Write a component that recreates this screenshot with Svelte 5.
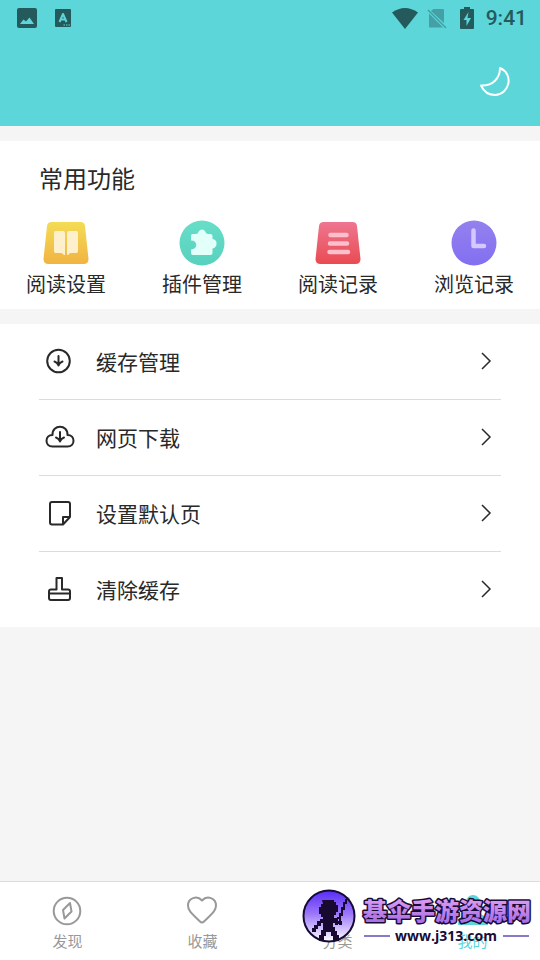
<script>
  const features = [
    { id: 'read', label: '阅读设置' },
    { id: 'plugin', label: '插件管理' },
    { id: 'log', label: '阅读记录' },
    { id: 'history', label: '浏览记录' }
  ];
  const rows = [
    { id: 'cache', label: '缓存管理' },
    { id: 'web', label: '网页下载' },
    { id: 'page', label: '设置默认页' },
    { id: 'clear', label: '清除缓存' }
  ];
  const tabs = [
    { id: 'discover', label: '发现' },
    { id: 'favorite', label: '收藏' },
    { id: 'category', label: '分类' },
    { id: 'mine', label: '我的' }
  ];
</script>

<div class="screen">
  <header>
    <div class="status">
      <div class="group left">
        <svg width="20" height="20" viewBox="0 0 20 20" aria-hidden="true">
          <rect width="20" height="20" rx="2" fill="#255a5d" />
          <path d="M3 16l3.500-4.500 2.500 2L12.500 9.500l4.500 6.500z" fill="#5cd6d9" />
        </svg>
        <svg width="16" height="18" viewBox="0 0 16 18" aria-hidden="true">
          <rect width="16" height="18" rx="1" fill="#255a5d" />
          <path d="M4.500 13L8 5l3.500 8M5.800 10.500h4.400" fill="none" stroke="#5cd6d9" stroke-width="2" stroke-linejoin="round" />
          <path d="M8.500 16h1.500m1 0h1.500m1 0h1.500" stroke="#5cd6d9" stroke-width="1.200" />
        </svg>
      </div>
      <div class="group right">
        <svg width="26" height="21" viewBox="0 0 26 21" aria-hidden="true">
          <path d="M0 4.500Q13-4.500 26 4.500L13 21z" fill="#255a5d" />
        </svg>
        <svg class="sim" width="20" height="21" viewBox="0 0 20 21" aria-hidden="true">
          <path d="M5 2L7 1h9q1 0 1 1v13L4 3zM2 5.500l14 14H3q-1 0-1-1z" fill="#44a0a4" />
          <path d="M1 2l18 18" stroke="#44a0a4" stroke-width="1.600" />
        </svg>
        <svg class="battery" width="14" height="22" viewBox="0 0 14 22" aria-hidden="true">
          <path d="M4 0h6v2h3q1 0 1 1v18q0 1-1 1H1q-1 0-1-1V3q0-1 1-1h3z" fill="#255a5d" />
          <path d="M8.500 5L3.500 13h3v6l4.500-8H7.500z" fill="#5cd6d9" />
        </svg>
        <time>9:41</time>
      </div>
    </div>
    <button class="night" aria-label="夜间模式">
      <svg width="32" height="32" viewBox="0 0 32 32" aria-hidden="true">
        <path d="M21 3C21 13 14 21 2 20.500C5 27 10 30 16 30C31 29 35 9 21 3Z" fill="none" stroke="#fff" stroke-width="2" stroke-linejoin="round" />
      </svg>
    </button>
  </header>

  <main>
    <section class="common">
      <h2>常用功能</h2>
      <div class="features">
        {#each features as f}
          <button>
            <svg width="46" height="46" viewBox="0 0 46 46" aria-hidden="true">
              <defs>
                <linearGradient id="g-{f.id}" x1="0" y1="0" x2="0" y2="1">
                  {#if f.id === 'read'}
                    <stop stop-color="#f4dc55" /><stop offset="1" stop-color="#f1b342" />
                  {:else if f.id === 'plugin'}
                    <stop stop-color="#67dec8" /><stop offset="1" stop-color="#58d1be" />
                  {:else if f.id === 'log'}
                    <stop stop-color="#ee7690" /><stop offset="1" stop-color="#e94b52" />
                  {:else}
                    <stop stop-color="#9481ee" /><stop offset="1" stop-color="#826ff1" />
                  {/if}
                </linearGradient>
              </defs>
              {#if f.id === 'read' || f.id === 'log'}
                <path d="M8.500 2h29q4 0 4.500 4l3.500 33q0 5-5 5H5.500q-5 0-5-5L4 6Q4.500 2 8.500 2z" fill="url(#g-{f.id})" />
              {:else}
                <circle cx="23" cy="23" r="22.500" fill="url(#g-{f.id})" />
              {/if}
              {#if f.id === 'read'}
                <path d="M12.500 11H20q2 0 2 2v22h-1.500q0-2-3-2h-5q-1.500 0-1.500-2V13q0-2 1.500-2zM26 11h7.500q1.500 0 1.500 2v18q0 2-1.500 2h-5q-3 0-3 2H24V13q0-2 2-2z" fill="#fff0cd" />
              {:else if f.id === 'plugin'}
                <path d="M13.500 14h3.500q2 0 2.500-2c1-3.500 6-3.500 7 0q.5 2 2.500 2h2.500q2 0 2 2v3c5.500 0 5.500 9 0 9.500V33q0 2-2 2H14q-2 0-2-2v-3.500c7-.5 7-9 0-9V16q0-2 1.500-2z" fill="#e2fff9" />
              {:else if f.id === 'log'}
                <path d="M15.500 15h16M15 23.500h17M14.500 32h18.500" stroke="#fbc0cb" stroke-width="4.500" stroke-linecap="round" />
              {:else}
                <path d="M22.500 10.500v15.500H33" fill="none" stroke="#d5c7ff" stroke-width="4.500" stroke-linecap="round" stroke-linejoin="round" />
              {/if}
            </svg>
            <span>{f.label}</span>
          </button>
        {/each}
      </div>
    </section>

    <section class="list">
      {#each rows as r}
        <button>
          <svg width="30" height="28" viewBox="0 0 30 28" fill="none" stroke="#292929" stroke-width="2" stroke-linejoin="round" stroke-linecap="round" aria-hidden="true">
            {#if r.id === 'cache'}
              <circle cx="13.500" cy="14" r="11.300" />
              <path d="M13.500 9v9.500M9.500 14.500q3 1 4 4 1-3 4-4" />
            {:else if r.id === 'web'}
              <path d="M7.500 23.500C-.5 23.500-.5 12 7.500 12C7 1 23 1 22.500 12C30.500 12 30.500 23.500 22.500 23.500Z" />
              <path d="M15 9v9.500M11 14.500q3 1 4 4 1-3 4-4" />
            {:else if r.id === 'page'}
              <path d="M7 3h16q2 0 2 2v13l-7 7.500H7q-2 0-2-2V5q0-2 2-2zM25 18h-7v7" />
            {:else}
              <path d="M11.500 14.500V3h5.500v11.500h6q2 0 2 2V23q0 2-2 2H6q-2 0-2-2v-6.500q0-2 2-2zM4 18.500h21" />
            {/if}
          </svg>
          <span>{r.label}</span>
          <svg class="chevron" width="12" height="18" viewBox="0 0 12 18" aria-hidden="true">
            <path d="M2 1l8 8-8 8" fill="none" stroke="#292929" stroke-width="1.500" />
          </svg>
        </button>
      {/each}
    </section>
  </main>

  <nav>
    {#each tabs as t}
      <button class:active={t.id === 'mine'}>
        <svg width="32" height="32" viewBox="0 0 32 32" fill="none" stroke="#999" stroke-width="2" stroke-linejoin="round" aria-hidden="true">
          {#if t.id === 'discover'}
            <circle cx="15" cy="17" r="13.300" />
            <path d="M18 9l1.500 8.500-7 7-1.500-8.500z" />
          {:else if t.id === 'favorite'}
            <path d="M15 6.500C10 1 1 4 1 11.500C1 16 3 18 13 27.500q2 2 4 0C27 18 29 16 29 11.500C29 4 20 1 15 6.500Z" />
          {:else if t.id === 'category'}
            <rect x="4" y="4" width="9" height="9" rx="2" /><rect x="18" y="4" width="9" height="9" rx="2" />
            <rect x="4" y="18" width="9" height="9" rx="2" /><rect x="18" y="18" width="9" height="9" rx="2" />
          {:else}
            <circle cx="16" cy="8" r="7" fill="#5cd6d9" stroke="none" />
            <path d="M1 31q0-12 15-12t15 12z" fill="#5cd6d9" stroke="none" />
          {/if}
        </svg>
        <span>{t.label}</span>
      </button>
    {/each}

    <svg class="brand" width="232" height="60" viewBox="0 0 232 60" role="img" aria-label="基伞手游资源网">
      <defs>
        <linearGradient id="disc" x1="0" y1="0" x2="0" y2="1">
          <stop stop-color="#582cf5" /><stop offset=".45" stop-color="#9a75fa" /><stop offset="1" stop-color="#fff" />
        </linearGradient>
        <linearGradient id="word" x1="0" y1="0" x2="0" y2="1">
          <stop offset=".2" stop-color="#dc9cf0" /><stop offset="1" stop-color="#9d65e3" />
        </linearGradient>
      </defs>
      <circle cx="28" cy="29" r="25.500" fill="url(#disc)" stroke="#140b35" stroke-width="2" />
      <path d="M21 13h12v2h2v3h2v7h-2v3h-2v3h4v3h3v3h-3v1h-3v-2h-2v4h2v4h2v4h2v6h-6v-5h-2v-4h-5v4h-2v5h-5v-6h2v-5h2v-7h-2v3h-3v3h-2v3h-4v-4h2v-3h3v-4h3v-2h3v-2h-2v-3h-2v-7h2v-3h2z" fill="#180931" />
      <path d="M44 12h2v5h-2v6h-2v6h-2v5h1v4h-3v-6h-2v-2h2v-4h2v-6h2v-5h2z" fill="#180931" />
      <text class="title" x="62" y="33">基伞手游资源网</text>
      <path d="M63 49h26M202 49h26" stroke="#8879c9" stroke-width="2" />
      <text class="url" x="145" y="54" text-anchor="middle">www.j313.com</text>
    </svg>
  </nav>
</div>

<style>
  :global(body) {
    margin: 0;
    background: #f5f5f5;
  }
  .screen {
    min-height: 100vh;
    display: flex;
    flex-direction: column;
    font-family: "Noto Sans CJK SC", sans-serif;
    color: #292929;
  }
  button {
    border: 0;
    padding: 0;
    background: none;
    font: inherit;
    color: inherit;
    cursor: pointer;
  }
  svg {
    display: block;
    flex: none;
  }
  header {
    display: flex;
    flex-direction: column;
    padding-bottom: 29px;
    background: #5cd6d9;
  }
  .status {
    height: 36px;
    display: flex;
    justify-content: space-between;
    align-items: center;
    padding: 0 13px 0 17px;
  }
  .group {
    display: flex;
    align-items: center;
  }
  .left {
    gap: 18px;
  }
  .sim {
    margin-left: 9px;
  }
  .battery {
    margin: 0 12px 0 13px;
  }
  time {
    font: 500 21px/24px Roboto, sans-serif;
    color: #255a5d;
  }
  .night {
    align-self: flex-end;
    margin: 29px 29px 0 0;
  }
  main {
    flex: 1;
    padding: 15px 0;
    display: flex;
    flex-direction: column;
    gap: 15px;
  }
  section {
    background: #fff;
  }
  .common {
    padding: 19px 26px 10px;
  }
  h2 {
    margin: 0 0 24px 13px;
    font-size: 24px;
    line-height: 36px;
    font-weight: 400;
  }
  .features {
    display: flex;
    justify-content: space-between;
  }
  .features button {
    display: flex;
    flex-direction: column;
    align-items: center;
    gap: 3px;
    font-size: 20px;
    line-height: 30px;
  }
  .list {
    padding: 0 39px;
  }
  .list button {
    width: 100%;
    height: 76px;
    box-sizing: border-box;
    display: flex;
    align-items: center;
    padding: 0 9px 2px 6px;
    border-bottom: 1px solid #dcdcdc;
    font-size: 21px;
    text-align: left;
  }
  .list button:last-child {
    height: 75px;
    border-bottom: 0;
  }
  .list span {
    flex: 1;
    margin-left: 21px;
    line-height: 32px;
  }
  nav {
    position: sticky;
    bottom: 0;
    display: flex;
    background: #fff;
    border-top: 1px solid #dcdcdc;
    height: 78px;
  }
  nav button {
    flex: 1;
    display: flex;
    flex-direction: column;
    align-items: center;
    justify-content: flex-start;
    padding-top: 12px;
    gap: 4px;
    font-size: 15px;
    line-height: 22px;
    color: #999;
  }
  nav .active {
    color: #5cd6d9;
  }
  .brand {
    position: absolute;
    right: 7px;
    top: 5px;
  }
  .title {
    font: 900 24px "Noto Sans CJK SC", sans-serif;
    fill: url(#word);
    stroke: #180b36;
    stroke-width: 3px;
    stroke-linejoin: round;
    paint-order: stroke;
  }
  .url {
    font: 700 14px "Open Sans", sans-serif;
    fill: #170d35;
  }
</style>
